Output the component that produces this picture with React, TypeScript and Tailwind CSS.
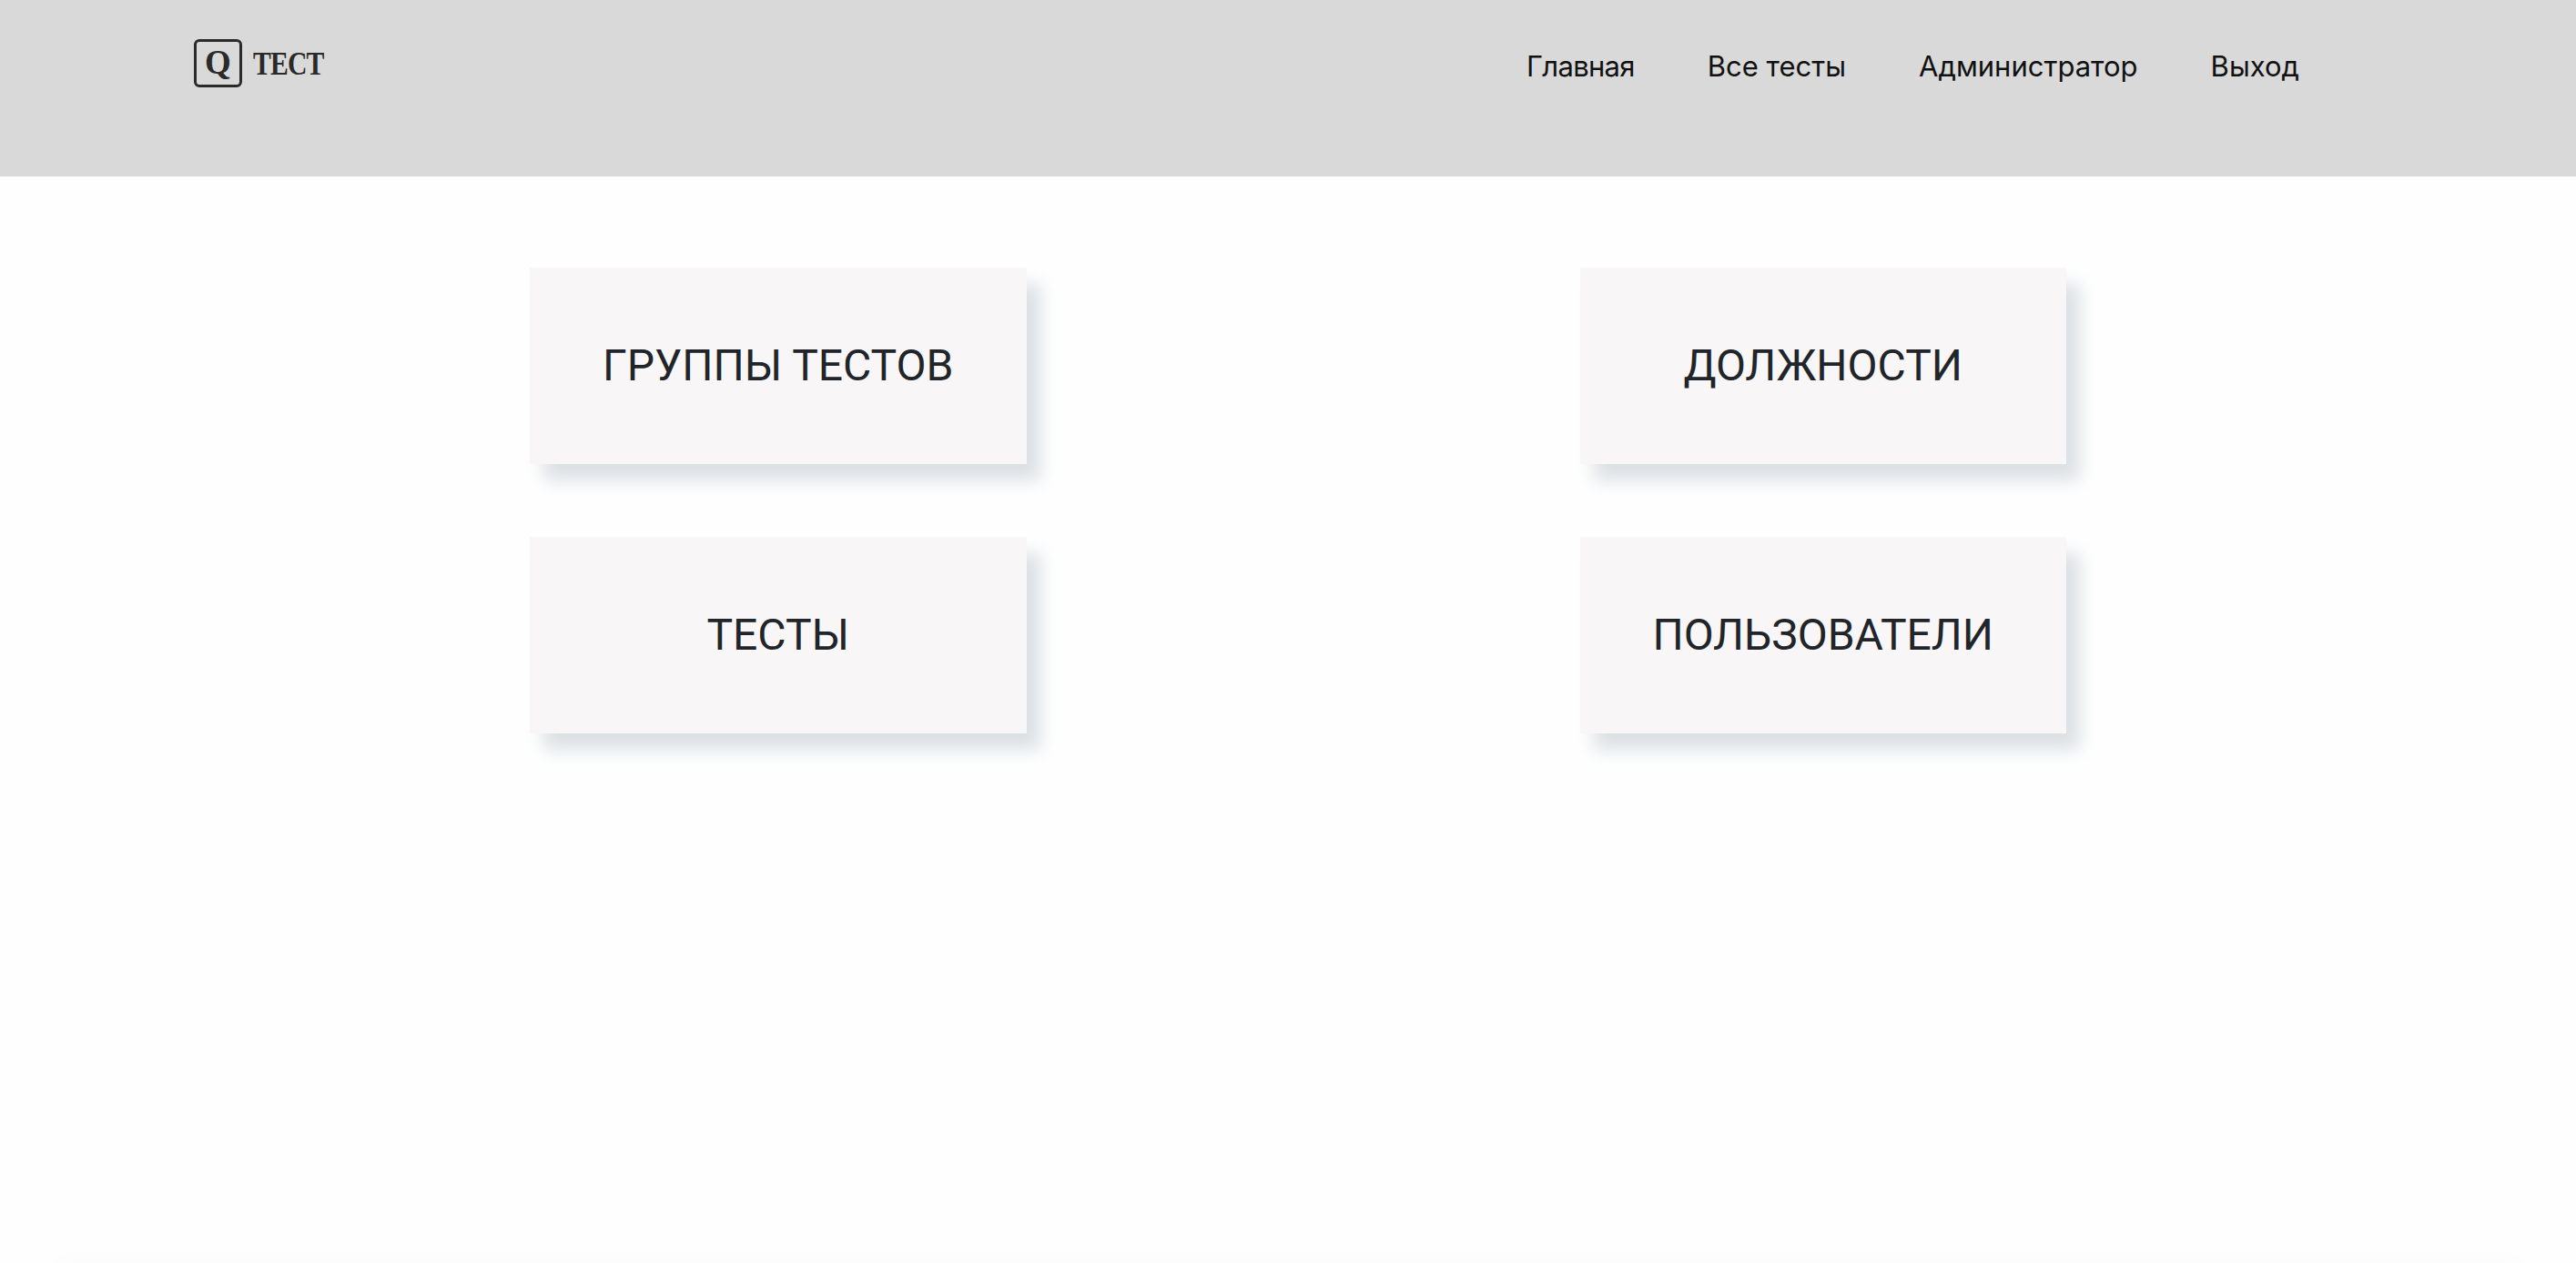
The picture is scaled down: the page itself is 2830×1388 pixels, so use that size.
const items = ["ГРУППЫ ТЕСТОВ", "ДОЛЖНОСТИ", "ТЕСТЫ", "ПОЛЬЗОВАТЕЛИ"];

export default function App() {
  return (
    <div className="relative h-[1388px] overflow-hidden bg-[#fefefe]">
      <header className="flex h-[194px] items-start justify-between bg-[#d9d9d9] pl-[213px] pr-[304px] pt-[43px]">
        <div className="flex items-center gap-[12px]">
          <div className="flex h-[53px] w-[53px] items-center justify-center rounded-[6px] border-[3px] border-[#2a2a2a] pb-[2px] text-[37px] font-bold leading-none text-[#2a2a2a] [font-family:'Liberation_Serif',serif]">
            Q
          </div>
          <span className="mt-[2px] origin-left scale-x-[0.85] text-[35px] font-bold leading-none tracking-[-1px] text-[#2a2a2a] [font-family:'Liberation_Serif',serif]">
            ТЕСТ
          </span>
        </div>
        <nav className="flex gap-[80px] pt-[8px] text-[31px] leading-[44px] text-[#111] [font-family:Inter,sans-serif]">
          <a className="tracking-[-0.7px]">Главная</a>
          <a>Все тесты</a>
          <a>Администратор</a>
          <a>Выход</a>
        </nav>
      </header>
      <main className="ml-[582px] mt-[100px] grid grid-cols-[max-content_max-content] gap-x-[608px] gap-y-[80px]">
        {items.map((t) => (
          <div
            key={t}
            className="flex h-[216px] items-center justify-center bg-[#f8f6f7] px-[80px] text-[48px] leading-none text-[#212529] shadow-[15px_18px_18px_#dbe0e4] [font-family:Roboto,sans-serif]"
          >
            {t}
          </div>
        ))}
      </main>
      <div className="absolute -bottom-[10px] left-[60px] right-[60px] h-[10px] shadow-[0_0_24px_rgba(0,0,0,0.03)]" />
    </div>
  );
}
